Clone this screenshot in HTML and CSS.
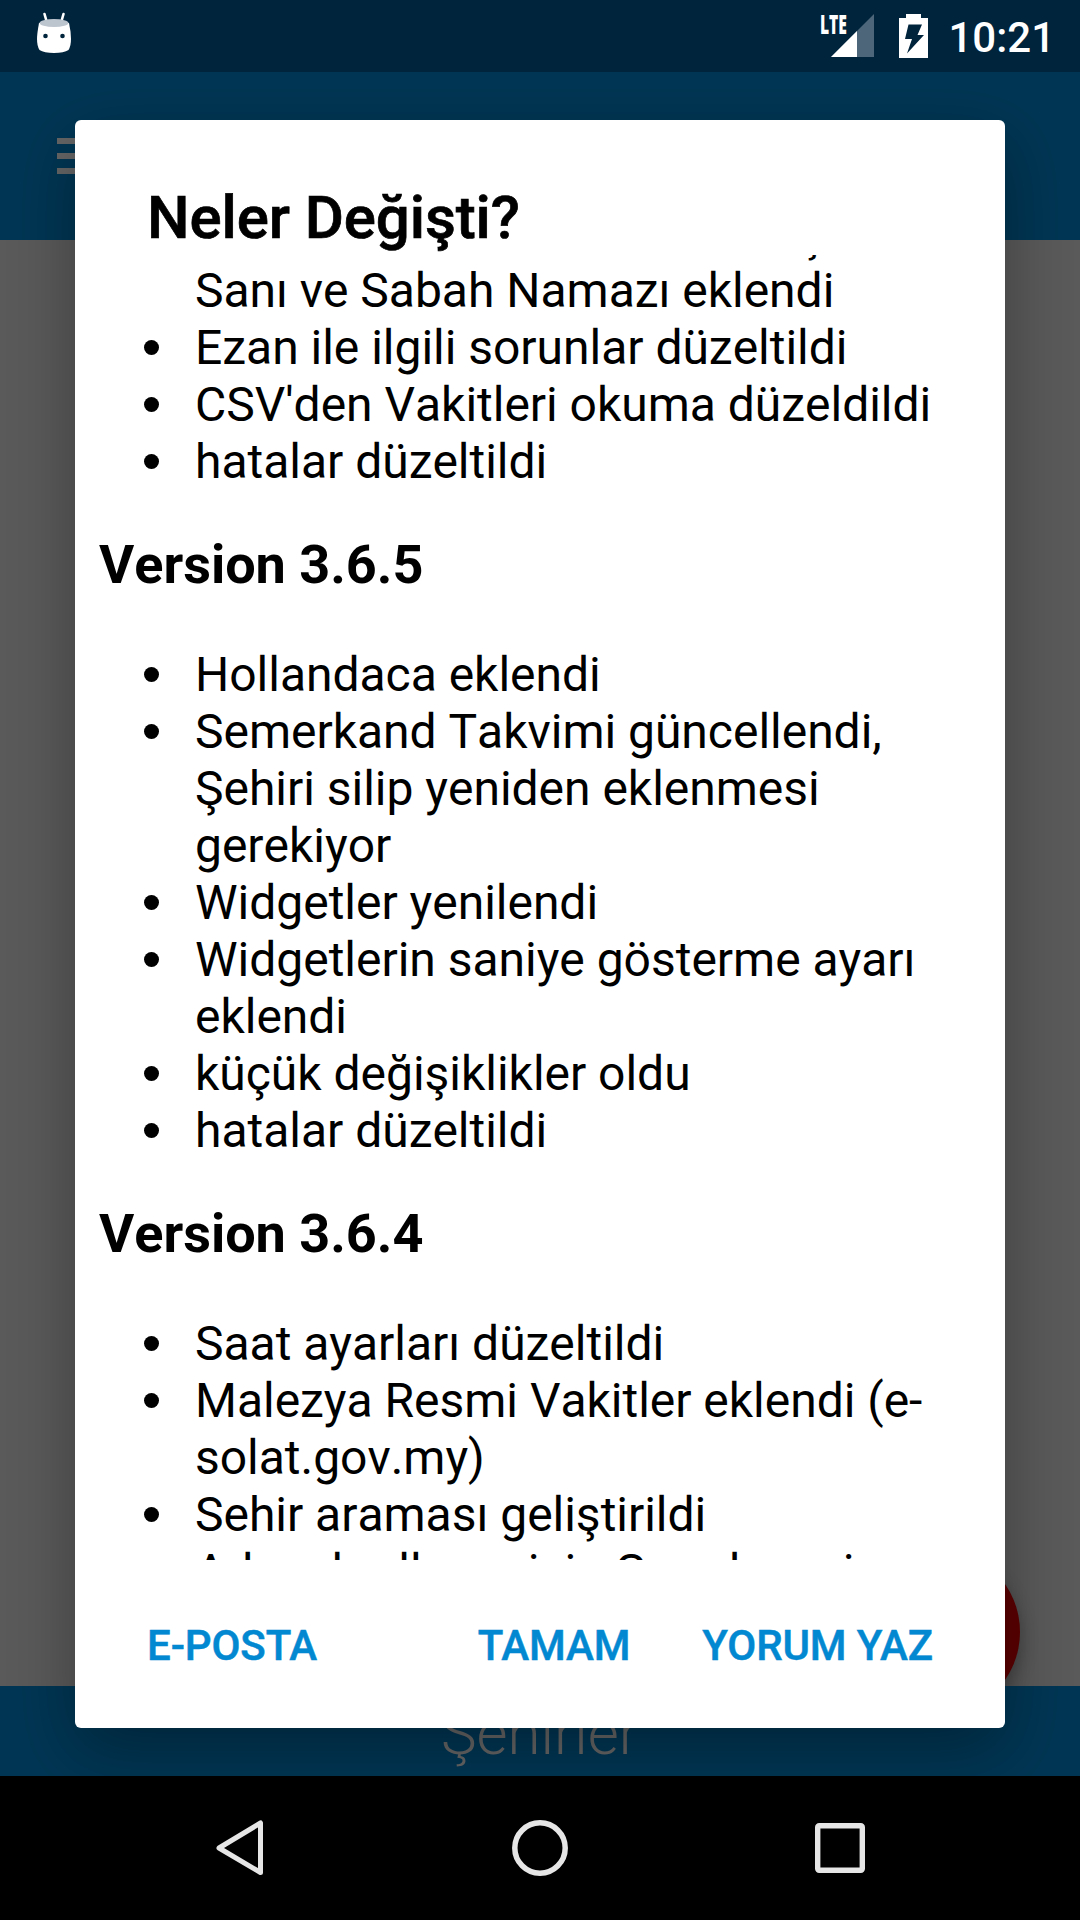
FILE: index.html
```html
<!DOCTYPE html>
<html lang="tr">
<head>
<meta charset="utf-8">
<title>Neler Değişti?</title>
<link rel="stylesheet" href="styles.css">
</head>
<body>
<div class="screen">
  <header class="status-bar">
    <svg class="status-robot" width="36" height="42" viewBox="0 0 36 42">
      <path d="M8.500 2 10.500 9M27.500 2 25.500 9" stroke="#fff" stroke-width="2.600" stroke-linecap="round"/>
      <path d="M3 11Q1 22 1 27Q1 34 3.500 38Q8 41 18 41Q28 41 32.500 38Q35 34 35 27Q35 20 33 11Z" fill="#fff"/>
      <ellipse cx="18" cy="11" rx="14.500" ry="4" fill="#bcc4ce"/>
      <circle cx="9.500" cy="24" r="2.300" fill="#00243c"/><circle cx="26.500" cy="24" r="2.300" fill="#00243c"/>
    </svg>
    <div class="status-icons">
      <div class="network">
        <span class="lte">LTE</span>
        <svg class="signal" width="43" height="43" viewBox="0 0 43 43">
          <path d="M43 0V43H0Z" fill="#4d667a"/><path d="M26 17V43H0Z" fill="#fff"/>
        </svg>
      </div>
      <svg class="battery" width="29" height="44" viewBox="0 0 29 44">
        <path d="M7 0H22V4H29V44H0V4H7Z" fill="#fff"/>
        <path d="M9.500 10.500H23L18.500 21H25L8 39.500 13 25H6Z" fill="#00243c"/>
      </svg>
      <span class="clock">10:21</span>
    </div>
  </header>
  <div class="toolbar">
    <div class="menu-icon"><i></i><i></i><i></i></div>
  </div>
  <main class="content"><div class="fab"></div></main>
  <div class="bottom-bar">Şehirler</div>
  <nav class="nav-bar">
    <svg width="50" height="58" viewBox="0 0 50 58"><path d="M45.500 4V53.500L4 29Z" fill="none" stroke="#e6e6e6" stroke-width="5" stroke-linejoin="round"/></svg>
    <svg width="58" height="58" viewBox="0 0 58 58"><circle cx="29" cy="29" r="25.200" fill="none" stroke="#e6e6e6" stroke-width="5.500"/></svg>
    <svg width="50" height="50" viewBox="0 0 50 50"><rect x="2.700" y="2.700" width="44.600" height="44.600" rx="1.500" fill="none" stroke="#e6e6e6" stroke-width="5.400"/></svg>
  </nav>

  <section class="dialog">
    <h2 class="dialog-title">Neler Değişti?</h2>
    <div class="changelog">
      <div class="changelog-body">
        <ul>
          <li>Vakitler Cuma selası İftar Akşam<br>Sanı ve Sabah Namazı eklendi</li>
          <li>Ezan ile ilgili sorunlar düzeltildi</li>
          <li>CSV'den Vakitleri okuma düzeldildi</li>
          <li>hatalar düzeltildi</li>
        </ul>
        <h3>Version 3.6.5</h3>
        <ul>
          <li>Hollandaca eklendi</li>
          <li>Semerkand Takvimi güncellendi,<br>Şehiri silip yeniden eklenmesi<br>gerekiyor</li>
          <li>Widgetler yenilendi</li>
          <li>Widgetlerin saniye gösterme ayarı<br>eklendi</li>
          <li>küçük değişiklikler oldu</li>
          <li>hatalar düzeltildi</li>
        </ul>
        <h3>Version 3.6.4</h3>
        <ul>
          <li>Saat ayarları düzeltildi</li>
          <li>Malezya Resmi Vakitler eklendi (e-<br>solat.gov.my)</li>
          <li>Sehir araması geliştirildi</li>
          <li>Adres karllama için Google veri</li>
        </ul>
      </div>
    </div>
    <footer class="actions">
      <button class="action">E-POSTA</button>
      <span class="spacer"></span>
      <button class="action">TAMAM</button>
      <button class="action">YORUM YAZ</button>
    </footer>
  </section>
</div>
</body>
</html>
```
FILE: styles.css
```css
* { box-sizing: border-box; }

body {
  margin: 0;
  font-family: Roboto, sans-serif;
}

.screen {
  position: relative;
  display: flex;
  flex-direction: column;
  width: 1080px;
  height: 1920px;
  overflow: hidden;
  background: #000;
}

.status-bar {
  display: flex;
  justify-content: space-between;
  height: 72px;
  padding: 12px 25px 0 36px;
  background: #00243c;
}

.status-icons { display: flex; }

.network {
  position: relative;
  width: 54px;
  margin-right: 25px;
}

.lte {
  position: absolute;
  left: 0;
  top: 0;
  color: #fff;
  font: 800 27px/24px "Open Sans", sans-serif;
  transform: scaleX(.58);
  transform-origin: left;
}

.signal { display: block; margin: 2px 0 0 11px; }
.battery { margin-top: 2px; margin-right: 20px; }

.clock {
  color: #fff;
  font-size: 42px;
  font-weight: 500;
  line-height: 51px;
}

.toolbar {
  height: 168px;
  padding: 66px 57px;
  background: #003654;
}

.menu-icon { display: flex; flex-direction: column; gap: 9px; }
.menu-icon i { width: 54px; height: 6px; background: #666; }

.content {
  position: relative;
  height: 1446px;
  background: #5a5a5a;
}

.fab {
  position: absolute;
  right: 60px;
  bottom: -30px;
  width: 168px;
  height: 168px;
  border-radius: 50%;
  background: #5c0000;
  box-shadow: 0 8px 18px rgba(0, 0, 0, .3);
}

.bottom-bar {
  position: relative;
  height: 90px;
  background: #003654;
  color: #666;
  font-size: 60px;
  font-weight: 300;
  line-height: 96px;
  text-align: center;
}

.nav-bar {
  position: relative;
  z-index: 1;
  display: flex;
  align-items: center;
  justify-content: space-between;
  height: 144px;
  padding: 0 215px;
  background: #000;
}

.dialog {
  position: absolute;
  left: 75px;
  top: 120px;
  display: flex;
  flex-direction: column;
  width: 930px;
  height: 1608px;
  border-radius: 6px;
  background: #fff;
  box-shadow: 0 22px 66px rgba(0, 0, 0, .32);
}

.dialog-title {
  height: 135px;
  margin: 0;
  padding: 62px 72px 0;
  font-size: 60px;
  font-weight: 500;
  letter-spacing: -.1px;
  line-height: 72px;
  -webkit-text-stroke: .7px #000;
}

.changelog {
  height: 1305px;
  overflow: hidden;
}

.changelog-body {
  margin-top: -50px;
  padding: 0 24px;
  font-size: 48px;
  font-kerning: none;
  letter-spacing: -.02px;
  line-height: 57px;
  white-space: nowrap;
}

.changelog ul {
  margin: 0;
  padding: 0 0 0 96px;
  list-style: none;
}

.changelog li { position: relative; }

.changelog li::before {
  content: "";
  position: absolute;
  left: -51px;
  top: 21px;
  width: 15px;
  height: 15px;
  border-radius: 50%;
  background: #000;
}

.changelog h3 {
  margin: 43px 0 50px;
  font-size: 54px;
  font-weight: 700;
  line-height: 63px;
}

.actions {
  display: flex;
  gap: 72px;
  height: 168px;
  padding: 61px 72px 0;
}

.spacer { flex: 1; }

.action {
  height: 50px;
  padding: 0;
  border: 0;
  background: none;
  color: #0288d1;
  font: 500 42px/50px Roboto, sans-serif;
  letter-spacing: -.1px;
  -webkit-text-stroke: .5px #0288d1;
}
```
